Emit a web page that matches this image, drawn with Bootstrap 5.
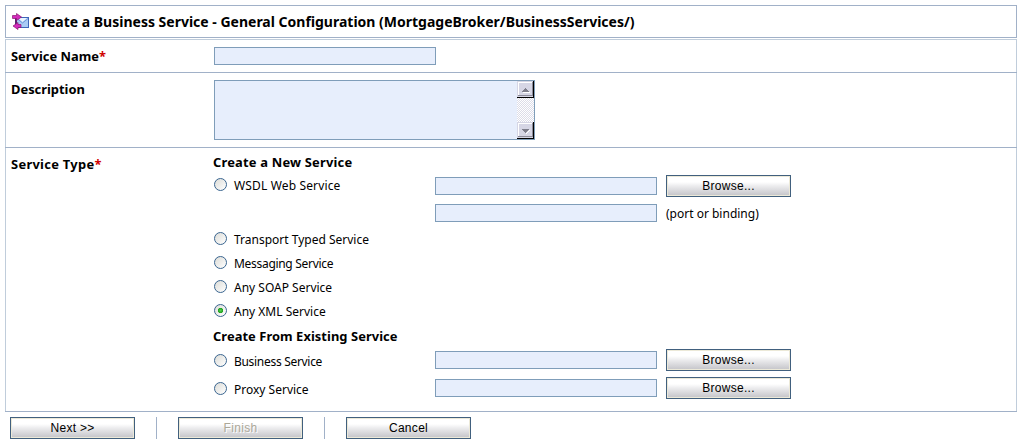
<!DOCTYPE html>
<html lang="en">
<head>
<meta charset="utf-8">
<meta name="viewport" content="width=device-width, initial-scale=1">
<title>Create a Business Service</title>
<link href="https://cdn.jsdelivr.net/npm/bootstrap@5.3.0/dist/css/bootstrap.min.css" rel="stylesheet">
<style>
body{font:12px/16px "Noto Sans","Open Sans",sans-serif;color:#000;background:#fff;padding:5px 3px 0 5px}
.title-bar{height:33px;border:1px solid #a1b1c8;padding:0 0 1px 6px;margin-bottom:1px}
.title-bar h1{font-size:14px;font-weight:700;line-height:18px;margin:2px 0 0 3px;white-space:nowrap}
.config{border:1px solid #c0cddb;border-bottom:0}
.config-row{border-bottom:1px solid #a1b1c8;margin:0 -1px;padding-left:1px}
.config-label{width:208px;padding:1px 0 0 5px;font-weight:700;font-size:12.9px;flex:none}
.req{color:#d00000}
.r-name{height:33px;padding-top:7px}
.r-desc{height:75px;padding-top:7px}
.r-type{height:264px;padding-top:5px}
.r-type .config-label{padding-top:3px;letter-spacing:.3px}
.form-control.field{width:222px;height:18px;min-height:0;padding:0 3px;border:1px solid #7f9db9;border-radius:0;background:#e7eefc;font-size:12px;flex:none}
.desc-box{width:321px;height:60px;border:1px solid #7f9db9;background:#e7eefc}
.desc-box textarea{flex:1;border:0;background:transparent;resize:none;overflow:hidden;outline:0;min-width:0}
.bar{width:17px;background:repeating-conic-gradient(#dcdce8 0 25%,#fff 0 50%) 0 0/2px 2px}
.bar svg{display:block}
.group-title{font-size:12.9px;font-weight:700;line-height:18px;margin:0 0 0 -1px;white-space:nowrap;letter-spacing:.06px}
.new-title{margin-bottom:1px;letter-spacing:.2px}
.existing{padding:4px 0 1px}
.opt{height:24px}
.opt-main{height:28px}
.opt label{width:201px;flex:none;margin-right:20px}
.opt .form-check-input{width:13px;height:13px;margin:-1px 7px 0 0;flex:none;border:1px solid #3a6590;background:linear-gradient(135deg,#dcdcd7,#fff)}
.opt .form-check-input:checked{background:radial-gradient(circle at 5.5px 5.5px,#55d551 0,#21a121 2.3px,transparent 3px),linear-gradient(135deg,#dcdcd7,#fff)}
.opt label span{padding-top:2px}
.opt-wsdl .form-check-input{margin:-3px 7px 0 0}
.opt-wsdl label span{letter-spacing:.15px;padding-top:0}
.opt-existing .form-check-input{margin:1px 7px 0 0}
.opt-existing label span{padding-top:4px}
.opt label .tight{letter-spacing:-.3px}
.slot{margin-right:9px}
.opt-port{height:27px;padding:0 0 1px 221px}
.port-note{margin-left:9px;padding-top:1px}
.btn.push{width:125px;height:22px;padding:0;border:1px solid #41607e;border-radius:0;box-shadow:inset 0 0 0 1px #ece9d8;background:linear-gradient(#fff 30%,#ececee 50%,#c3c3c8 100%);font:12px/20px "Liberation Sans",Arial,sans-serif;letter-spacing:.3px;color:#000;flex:none}
.btn.push:disabled{color:#aca899;text-shadow:1px 1px #fff;opacity:1}
.rule{width:1px;height:22px;background:#a1b1c8;margin:0 21px}
.actions{padding:5px 0 0 5px}
</style>
</head>
<body>
<header class="title-bar d-flex align-items-center">
<svg width="17" height="17" viewBox="0 0 17 17"><path fill="#3e66b8" d="M4 4h13v11H4z"/><path fill="#a9cbf5" d="M5 5h11v9H5z"/><path fill="#eaf4ff" d="M6 5h9l-4.500 4z"/><path fill="none" stroke="#6f95d8" d="M5 5.500l5.500 4.500 5.500-4.500"/><path fill="#5b2472" d="M3 5h2v7H3z"/><path fill="#d42bbd" stroke="#8b1670" stroke-width=".7" d="M.5 2.500h4V.5L9.500 4l-5 3.500v-2h-4zM9 11.500H6v-2L1 13l5 3.500v-2h3z"/></svg>
<h1>Create a Business Service - General Configuration (MortgageBroker/BusinessServices/)</h1>
</header>
<main class="config">
<div class="config-row r-name d-flex"><div class="config-label">Service Name<span class="req">*</span></div><input class="form-control field" type="text" aria-label="Service Name"></div>
<div class="config-row r-desc d-flex"><div class="config-label">Description</div>
<div class="desc-box d-flex"><textarea aria-label="Description"></textarea>
<div class="bar d-flex flex-column justify-content-between">
<svg width="17" height="17" shape-rendering="crispEdges"><path fill="#000" d="M0 0h17v17H0z"/><path fill="#d6d6e5" d="M0 0h16v16H0z"/><path fill="#8c8c9b" d="M1 15h15V1h-1v13H1z"/><path fill="#fff" d="M1 1h14v1H2v12H1z"/><path fill="#fff" d="M6 11h7v1H6z"/><path fill="#7f7f8c" d="M8 7h1v1h1v1h1v1h1v1H5v-1h1V9h1V8h1z"/></svg>
<svg width="17" height="17" shape-rendering="crispEdges"><path fill="#000" d="M0 0h17v17H0z"/><path fill="#d6d6e5" d="M0 0h16v16H0z"/><path fill="#8c8c9b" d="M1 15h15V1h-1v13H1z"/><path fill="#fff" d="M1 1h14v1H2v12H1z"/><path fill="#fff" d="M12 8h1v1h-1v1h-1v1h-1v1H9v-1h1v-1h1V9h1z"/><path fill="#7f7f8c" d="M5 7h7v1h-1v1h-1v1H9v1H8v-1H7V9H6V8H5z"/></svg>
</div></div></div>
<div class="config-row r-type d-flex"><div class="config-label">Service Type<span class="req">*</span></div>
<div>
<h2 class="group-title new-title">Create a New Service</h2>
<div class="opt opt-main opt-wsdl d-flex align-items-center"><label class="d-flex align-items-center"><input class="form-check-input" type="radio" name="t"><span>WSDL Web Service</span></label><span class="slot"><input class="form-control field" type="text" aria-label="WSDL"></span><button class="btn push">Browse...</button></div>
<div class="opt opt-port d-flex align-items-center"><input class="form-control field" type="text" aria-label="Port"><span class="port-note">(port or binding)</span></div>
<div class="opt d-flex align-items-center"><label class="d-flex align-items-center"><input class="form-check-input" type="radio" name="t"><span>Transport Typed Service</span></label></div>
<div class="opt d-flex align-items-center"><label class="d-flex align-items-center"><input class="form-check-input" type="radio" name="t"><span class="tight">Messaging Service</span></label></div>
<div class="opt d-flex align-items-center"><label class="d-flex align-items-center"><input class="form-check-input" type="radio" name="t"><span>Any SOAP Service</span></label></div>
<div class="opt d-flex align-items-center"><label class="d-flex align-items-center"><input class="form-check-input" type="radio" name="t" checked><span>Any XML Service</span></label></div>
<h2 class="group-title existing">Create From Existing Service</h2>
<div class="opt opt-main opt-existing d-flex align-items-center"><label class="d-flex align-items-center"><input class="form-check-input" type="radio" name="t"><span class="tight">Business Service</span></label><span class="slot"><input class="form-control field" type="text" aria-label="Business Service"></span><button class="btn push">Browse...</button></div>
<div class="opt opt-main opt-existing d-flex align-items-center"><label class="d-flex align-items-center"><input class="form-check-input" type="radio" name="t"><span>Proxy Service</span></label><span class="slot"><input class="form-control field" type="text" aria-label="Proxy Service"></span><button class="btn push">Browse...</button></div>
</div></div>
</main>
<div class="actions d-flex"><button class="btn push">Next &gt;&gt;</button><span class="rule"></span><button class="btn push" disabled>Finish</button><span class="rule"></span><button class="btn push">Cancel</button></div>
<script src="https://cdn.jsdelivr.net/npm/bootstrap@5.3.0/dist/js/bootstrap.bundle.min.js"></script>
</body>
</html>
